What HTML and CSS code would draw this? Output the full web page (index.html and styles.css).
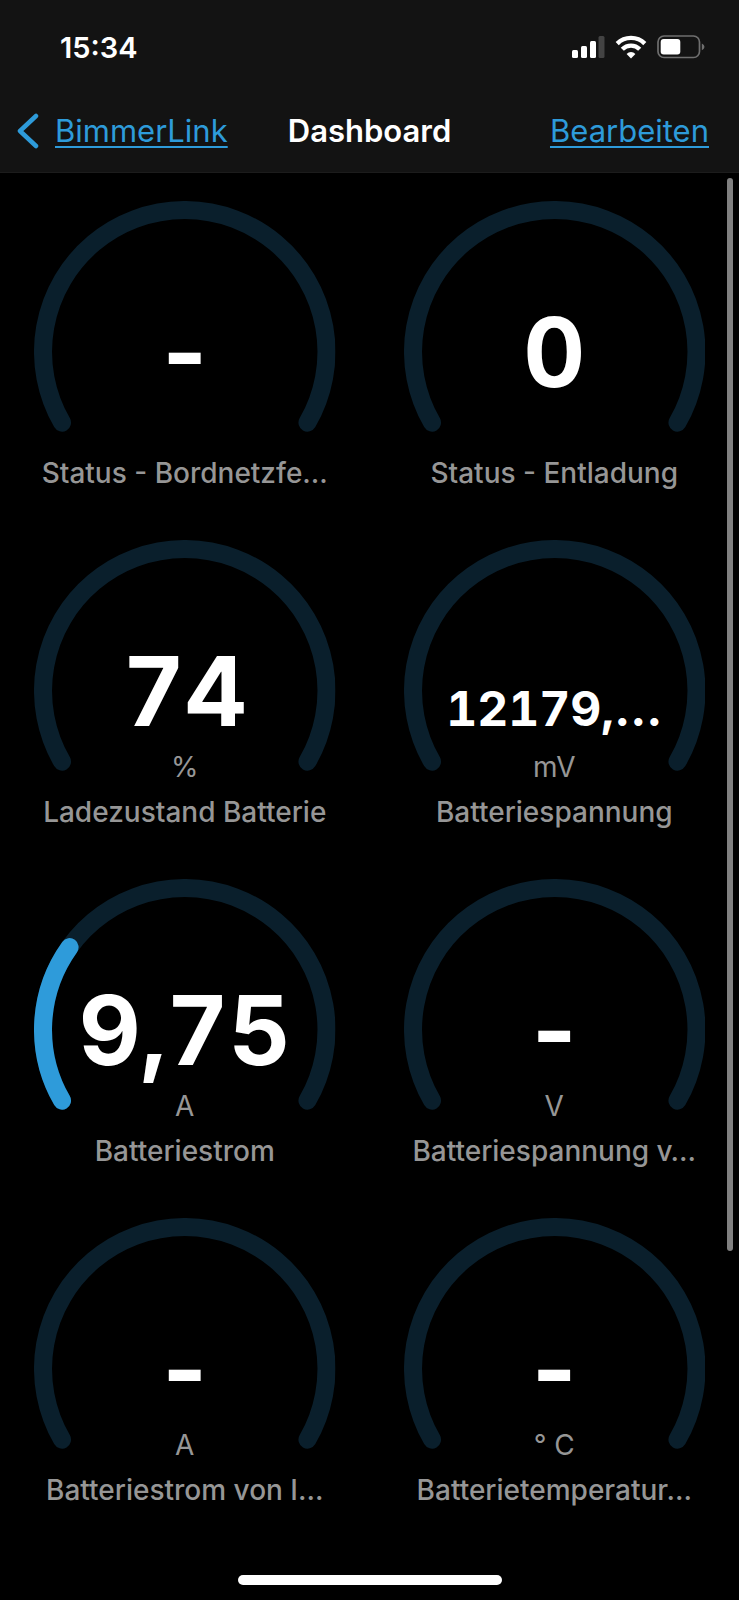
FILE: index.html
```html
<!DOCTYPE html>
<html lang="de">
<head>
<meta charset="utf-8">
<meta name="viewport" content="width=device-width, initial-scale=1">
<title>Dashboard</title>
<link rel="stylesheet" href="styles.css">
</head>
<body>
<svg class="defs" aria-hidden="true">
  <symbol id="arc" viewBox="0 0 301 231">
    <path d="M27.96 221.25A141.5 141.5 0 1 1 273.04 221.25" fill="none" stroke="currentColor" stroke-width="18" stroke-linecap="round" pathLength="240"/>
  </symbol>
</svg>
<header class="header">
  <div class="status">
    <time class="clock">15:34</time>
    <div class="status-icons">
      <svg width="33" height="24" viewBox="0 0 33 24" fill="#fff" aria-label="Mobilfunk">
        <rect x="0" y="15" width="6" height="8" rx="1.5"/>
        <rect x="9" y="11" width="6" height="12" rx="1.5"/>
        <rect x="18" y="6" width="6" height="17" rx="1.5"/>
        <rect x="26.500" y="1" width="6" height="22" rx="1.5" fill="#434343"/>
      </svg>
      <svg width="32" height="24" viewBox="0 0 32 24" fill="none" stroke="#fff" stroke-width="4.400" aria-label="WLAN">
        <path d="M2.200 8.600A19.600 19.600 0 0 1 29.800 8.600"/>
        <path d="M7.300 14.200A12.300 12.300 0 0 1 24.700 14.200"/>
        <path d="M16 23.500L11.600 18.900A6.300 6.300 0 0 1 20.400 18.900Z" fill="#fff" stroke="none"/>
      </svg>
      <svg width="48" height="24" viewBox="0 0 48 24" aria-label="Batterie">
        <rect x="1" y="1" width="41.500" height="21.500" rx="6" fill="none" stroke="#6f6f6f" stroke-width="1.700"/>
        <rect x="3.700" y="4" width="19.600" height="15.600" rx="3" fill="#fff"/>
        <path d="M44.800 8.400C48.300 10 48.300 13.600 44.800 15.200Z" fill="#6f6f6f"/>
      </svg>
    </div>
  </div>
  <nav class="nav">
    <div class="back">
      <svg width="22" height="36" viewBox="0 0 22 36" fill="none" stroke="#2e9bda" stroke-width="4.500" stroke-linecap="round" stroke-linejoin="round" aria-hidden="true"><path d="M19 3L3 18L19 33"/></svg>
      <a class="link" href="#">BimmerLink</a>
    </div>
    <h1 class="title">Dashboard</h1>
    <a class="link edit" href="#">Bearbeiten</a>
  </nav>
</header>
<main class="main">
  <div class="grid">
    <section class="card">
      <svg class="arc" viewBox="0 0 301 231"><use href="#arc"/></svg>
      <div class="readout"><div class="value">-</div><div class="unit"></div></div>
      <h2 class="label">Status - Bordnetzfe…</h2>
    </section>
    <section class="card">
      <svg class="arc" viewBox="0 0 301 231"><use href="#arc"/></svg>
      <div class="readout"><div class="value">0</div><div class="unit"></div></div>
      <h2 class="label">Status - Entladung</h2>
    </section>
    <section class="card">
      <svg class="arc" viewBox="0 0 301 231"><use href="#arc"/></svg>
      <div class="readout"><div class="value">74</div><div class="unit">%</div></div>
      <h2 class="label">Ladezustand Batterie</h2>
    </section>
    <section class="card">
      <svg class="arc" viewBox="0 0 301 231"><use href="#arc"/></svg>
      <div class="readout"><div class="value"><span class="small">12179,…</span></div><div class="unit">mV</div></div>
      <h2 class="label">Batteriespannung</h2>
    </section>
    <section class="card">
      <svg class="arc" viewBox="0 0 301 231"><use href="#arc"/><path class="level" d="M27.960 221.250A141.500 141.500 0 1 1 273.040 221.250" pathLength="240" stroke-dasharray="65.600 400"/></svg>
      <div class="readout"><div class="value">9,75</div><div class="unit">A</div></div>
      <h2 class="label">Batteriestrom</h2>
    </section>
    <section class="card">
      <svg class="arc" viewBox="0 0 301 231"><use href="#arc"/></svg>
      <div class="readout"><div class="value">-</div><div class="unit">V</div></div>
      <h2 class="label">Batteriespannung v…</h2>
    </section>
    <section class="card">
      <svg class="arc" viewBox="0 0 301 231"><use href="#arc"/></svg>
      <div class="readout"><div class="value">-</div><div class="unit">A</div></div>
      <h2 class="label">Batteriestrom von I…</h2>
    </section>
    <section class="card">
      <svg class="arc" viewBox="0 0 301 231"><use href="#arc"/></svg>
      <div class="readout"><div class="value">-</div><div class="unit">° C</div></div>
      <h2 class="label">Batterietemperatur…</h2>
    </section>
  </div>
  <div class="scrollbar"></div>
</main>
<div class="home"></div>
</body>
</html>
```
FILE: styles.css
```css
* { box-sizing: border-box; }
body {
  margin: 0;
  min-height: 100vh;
  display: flex;
  flex-direction: column;
  background: #000;
  color: #fff;
  font-family: Inter, "Liberation Sans", sans-serif;
}
.defs { position: absolute; width: 0; height: 0; }
.header {
  background: #131313;
  border-bottom: 1px solid #1c1c1c;
  padding-bottom: 4px;
}
.status {
  display: flex;
  justify-content: space-between;
  align-items: center;
  height: 94px;
  padding: 0 34px 0 60px;
}
.clock { font-size: 29px; font-weight: 600; }
.status-icons { display: flex; gap: 10px; }
.nav {
  display: grid;
  grid-template-columns: 1fr auto 1fr;
  align-items: center;
  height: 74px;
  padding: 0 17px;
}
.back { display: flex; align-items: center; gap: 16px; }
.link {
  color: #2e9bda;
  font-size: 31px;
  line-height: 40px;
  text-decoration: underline;
  text-decoration-thickness: 2px;
  text-underline-offset: 4px;
}
.edit { justify-self: end; margin-right: 13px; }
.title { margin: 0; font-size: 31px; line-height: 40px; font-weight: 600; }
.main { position: relative; flex: 1; padding: 28px 0 76px; }
.grid {
  display: grid;
  grid-template-columns: 1fr 1fr;
  row-gap: 49px;
}
.card {
  display: grid;
  grid-template-columns: minmax(0, 1fr);
  row-gap: 9px;
  padding: 0 34px;
  text-align: center;
}
.arc {
  grid-area: 1 / 1;
  width: 100%;
  color: #0a1f2c;
}
.level {
  fill: none;
  stroke: #2e9bda;
  stroke-width: 18;
  stroke-linecap: round;
}
.readout { grid-area: 1 / 1; padding-top: 95px; }
.value {
  font-size: 96px;
  line-height: 112px;
  height: 114px;
  font-weight: 700;
  font-variant-numeric: tabular-nums;
  white-space: nowrap;
}
.small { font-size: 48px; }
.unit { height: 36px; font-size: 28px; line-height: 36px; color: #969696; }
.label {
  margin: 0;
  font-size: 28px;
  line-height: 36px;
  font-weight: 500;
  color: #969696;
  white-space: nowrap;
}
.scrollbar {
  position: absolute;
  top: 5px;
  right: 6px;
  width: 6px;
  height: 75.2%;
  border-radius: 3px;
  background: #808080;
}
.home {
  position: fixed;
  bottom: 15px;
  left: 50%;
  width: 264px;
  height: 10px;
  margin-left: -132px;
  border-radius: 5px;
  background: #fff;
}
```
